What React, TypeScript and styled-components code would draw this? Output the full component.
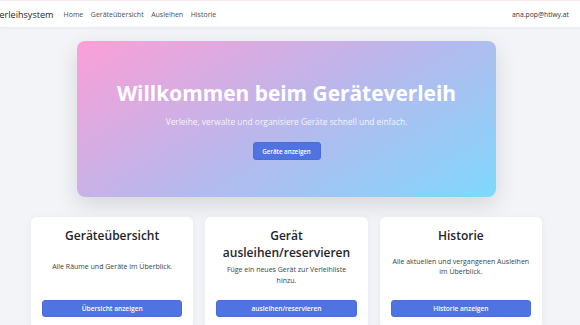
import React from "react";
import styled, { createGlobalStyle } from "styled-components";

const Global = createGlobalStyle`
  html, body { margin: 0; padding: 0; }
  body {
    background: #f3f4f8;
    font-family: "Segoe UI", "Open Sans", "Noto Sans", sans-serif;
    color: #212529;
    overflow: hidden;
  }
  * { box-sizing: border-box; }
`;

const Nav = styled.nav`
  height: 27px;
  background: #ffffff;
  border-top: 1px solid #fbe9ee;
  box-shadow: 0 1px 3px rgba(0, 0, 0, 0.06);
  display: flex;
  align-items: center;
  padding: 0 11px 0 0;
`;

const Brand = styled.span`
  font-size: 9.1px;
  color: #212529;
  margin-left: -6px;
  margin-right: 10px;
  white-space: nowrap;
`;

const Links = styled.div`
  display: flex;
  gap: 7.5px;
  flex: 1;
`;

const NavLink = styled.a`
  font-size: 7px;
  color: #4a4f55;
  text-decoration: none;
`;

const User = styled.span`
  font-size: 6.8px;
  color: #333;
`;

const Main = styled.main`
  width: 573px;
  padding-top: 14px;
  display: flex;
  flex-direction: column;
  align-items: center;
`;

const Hero = styled.section`
  width: 419px;
  height: 156px;
  border-radius: 8px;
  background: linear-gradient(150deg, #fc9fd6 0%, #bab7ec 50%, #7fd8fd 100%);
  box-shadow: 0 8px 22px rgba(0, 0, 0, 0.12);
  display: flex;
  flex-direction: column;
  align-items: center;
  padding-top: 38px;
  color: #fff;
`;

const HeroTitle = styled.h1`
  margin: 0;
  font-size: 20.9px;
  font-weight: 700;
  line-height: 28px;
`;

const HeroText = styled.p`
  margin: 9px 0 0;
  font-size: 8.4px;
  line-height: 12px;
  color: rgba(255, 255, 255, 0.88);
`;

const Button = styled.a<{ $wide?: boolean }>`
  display: flex;
  align-items: center;
  justify-content: center;
  height: ${(p) => (p.$wide ? "17px" : "18px")};
  width: ${(p) => (p.$wide ? "100%" : "68px")};
  background: #4f73e0;
  border: 1px solid #4a6dd8;
  border-radius: 3px;
  color: #fff;
  font-size: ${(p) => (p.$wide ? "6.6px" : "6.2px")};
  font-weight: 600;
  text-decoration: none;
`;

const HeroButton = styled(Button)`
  margin-top: 14px;
`;

const Cards = styled.div`
  width: 511px;
  display: grid;
  grid-template-columns: repeat(3, 1fr);
  gap: 12px;
  margin-top: 20px;
`;

const Card = styled.div`
  background: #fff;
  border-radius: 6px;
  box-shadow: 0 2px 8px rgba(0, 0, 0, 0.05);
  padding: 11px 11px 12px;
  display: flex;
  flex-direction: column;
  align-items: center;
  text-align: center;
`;

const CardTitle = styled.h2`
  margin: 0;
  font-size: 12px;
  font-weight: 600;
  line-height: 16.5px;
  color: #212529;
`;

const CardBody = styled.div`
  flex: 1;
  display: flex;
  align-items: center;
  justify-content: center;
  padding: 4px 0;
`;

const CardText = styled.p`
  margin: 0;
  font-size: 7px;
  line-height: 10.5px;
  color: #3a3f45;
`;

const CardButton = styled(Button)`
  margin-top: 10px;
`;

const cards = [
  {
    title: "Geräteübersicht",
    text: "Alle Räume und Geräte im Überblick.",
    button: "Übersicht anzeigen",
  },
  {
    title: "Gerät ausleihen/reservieren",
    text: "Füge ein neues Gerät zur Verleihliste hinzu.",
    button: "ausleihen/reservieren",
  },
  {
    title: "Historie",
    text: "Alle aktuellen und vergangenen Ausleihen im Überblick.",
    button: "Historie anzeigen",
  },
];

export default function App() {
  return (
    <>
      <Global />
      <Nav>
        <Brand>Verleihsystem</Brand>
        <Links>
          <NavLink href="#">Home</NavLink>
          <NavLink href="#">Geräteübersicht</NavLink>
          <NavLink href="#">Ausleihen</NavLink>
          <NavLink href="#">Historie</NavLink>
        </Links>
        <User>ana.pop@htlwy.at</User>
      </Nav>
      <Main>
        <Hero>
          <HeroTitle>Willkommen beim Geräteverleih</HeroTitle>
          <HeroText>Verleihe, verwalte und organisiere Geräte schnell und einfach.</HeroText>
          <HeroButton href="#">Geräte anzeigen</HeroButton>
        </Hero>
        <Cards>
          {cards.map((c) => (
            <Card key={c.button}>
              <CardTitle>{c.title}</CardTitle>
              <CardBody>
                <CardText>{c.text}</CardText>
              </CardBody>
              <CardButton $wide href="#">
                {c.button}
              </CardButton>
            </Card>
          ))}
        </Cards>
      </Main>
    </>
  );
}
